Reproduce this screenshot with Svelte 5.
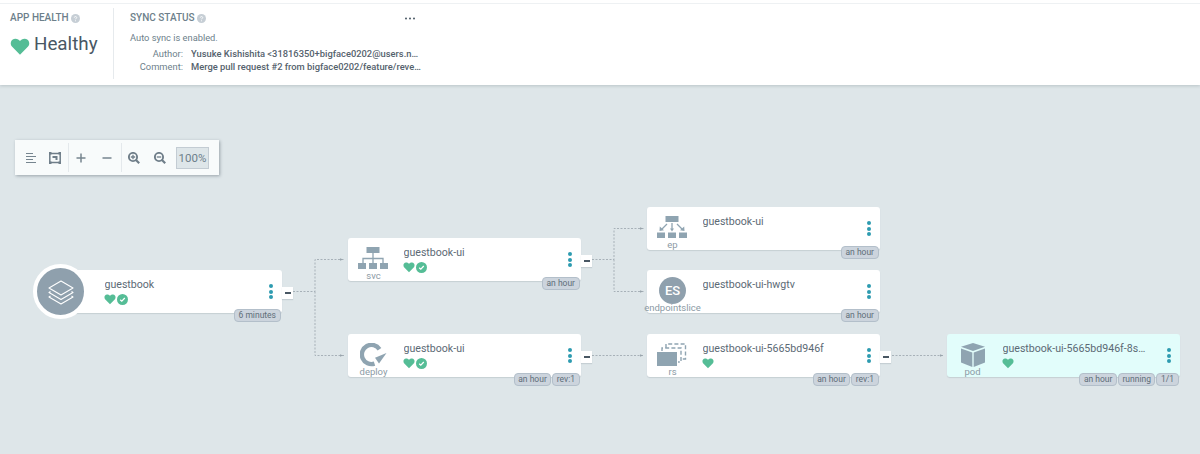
<script lang="ts">
  type GraphNode = {
    x: number;
    y: number;
    name: string;
    kind: string;
    icon: string;
    heart?: boolean;
    check?: boolean;
    badges: string[];
    collapse?: boolean;
    live?: boolean;
    app?: boolean;
  };

  const nodes: GraphNode[] = [
    { x: 49, y: 270, name: "guestbook", kind: "", icon: "app", heart: true, check: true, badges: ["6 minutes"], collapse: true, app: true },
    { x: 348, y: 238, name: "guestbook-ui", kind: "svc", icon: "svc", heart: true, check: true, badges: ["an hour"], collapse: true },
    { x: 348, y: 334, name: "guestbook-ui", kind: "deploy", icon: "deploy", heart: true, check: true, badges: ["an hour", "rev:1"], collapse: true },
    { x: 647, y: 207, name: "guestbook-ui", kind: "ep", icon: "ep", badges: ["an hour"] },
    { x: 647, y: 270, name: "guestbook-ui-hwgtv", kind: "endpointslice", icon: "es", badges: ["an hour"] },
    { x: 647, y: 334, name: "guestbook-ui-5665bd946f", kind: "rs", icon: "rs", heart: true, badges: ["an hour", "rev:1"], collapse: true },
    { x: 947, y: 334, name: "guestbook-ui-5665bd946f-8sq2x", kind: "pod", icon: "pod", heart: true, badges: ["an hour", "running", "1/1"], live: true }
  ];

  const edges = [
    "M293 291.5H315V259.5H344",
    "M315 291.5V355.5H344",
    "M592 259.5H614V228.5H644",
    "M614 259.5V291.5H644",
    "M592 355.5H644",
    "M892 355.5H944"
  ];
  const arrows = [[344, 259.5], [344, 355.5], [644, 228.5], [644, 291.5], [644, 355.5], [944, 355.5]];
</script>

{#snippet heart(size: number)}
  <svg class="heart" width={size} height={size} viewBox="0 0 24 24">
    <path d="M12 22.5 2.6 13C-.6 9.6.8 3.6 6 3.2c2.8-.2 4.9 1.2 6 2.8 1.1-1.6 3.2-3 6-2.8 5.2.4 6.6 6.4 3.4 9.8Z" />
  </svg>
{/snippet}

{#snippet help()}
  <svg class="help" width="9" height="9" viewBox="0 0 9 9">
    <circle cx="4.5" cy="4.5" r="4.5" fill="#c6ced5" />
    <path d="M3.3 3.6c0-1.4 2.4-1.4 2.4 0 0 .9-1.2.8-1.2 1.7" fill="none" stroke="#fff" stroke-width=".9" />
    <circle cx="4.5" cy="6.8" r=".55" fill="#fff" />
  </svg>
{/snippet}

{#snippet kindIcon(icon: string)}
  {#if icon === "svc"}
    <svg width="31" height="23" viewBox="0 0 31 23" fill="#8fa4b1">
      <rect x="8.5" y="0" width="13" height="6" />
      <path d="M15 6v5M5 16v-4.5h20V16M15 11v5" fill="none" stroke="#8fa4b1" stroke-width="1.3" />
      <rect x="0" y="16" width="8" height="6" />
      <rect x="11" y="16" width="8" height="6" />
      <rect x="22" y="16" width="8" height="6" />
    </svg>
  {:else if icon === "deploy"}
    <svg width="27" height="24" viewBox="0 0 27 24">
      <path d="M14.5 20.6A9.6 9.6 0 1 1 19.5 6.2" fill="none" stroke="#8fa4b1" stroke-width="4.4" />
      <path d="M26.5 10 15 14.8 19 20.5Z" fill="#8fa4b1" />
    </svg>
  {:else if icon === "ep"}
    <svg width="31" height="23" viewBox="0 0 31 23" fill="#8fa4b1">
      <rect x="8.5" y="0" width="13" height="6" />
      <path d="M15 7v7M10 8l-5 5M20 8l5 5" fill="none" stroke="#8fa4b1" stroke-width="1.3" />
      <path d="M13 12.5h4L15 15.5ZM2.8 10.5l4.2 3.8-4.5.8ZM27.2 10.5l-4.2 3.8 4.5.8Z" />
      <rect x="0" y="16.5" width="8" height="5.5" />
      <rect x="11" y="16.5" width="8" height="5.5" />
      <rect x="22" y="16.5" width="8" height="5.5" />
    </svg>
  {:else if icon === "es"}
    <span class="es">ES</span>
  {:else if icon === "rs"}
    <svg width="31" height="24" viewBox="0 0 31 24">
      <path d="M9 5V1h19.5v15H25" fill="none" stroke="#8fa4b1" stroke-width="1.4" stroke-dasharray="4 2.2" />
      <path d="M5 8V5h19v14h-3" fill="none" stroke="#8fa4b1" stroke-width="1.4" stroke-dasharray="4 2.2" />
      <rect x="0" y="9" width="20" height="14" fill="#8fa4b1" />
    </svg>
  {:else if icon === "pod"}
    <svg width="24" height="24" viewBox="0 0 24 24" fill="#8fa4b1">
      <path d="M12 0 24 3.8 12 8 0 3.8Z" />
      <path d="M0 5.5 11.3 9.5V24L0 19.5Z" />
      <path d="M24 5.5 12.7 9.5V24L24 19.5Z" />
    </svg>
  {/if}
{/snippet}

<div class="page">
  <header class="status-bar">
    <div class="status-inner">
      <section class="health">
        <h2>APP HEALTH {@render help()}</h2>
        <div class="health-value">{@render heart(20)}<span>Healthy</span></div>
      </section>
      <section class="sync">
        <div class="sync-head">
          <h2>SYNC STATUS {@render help()}</h2>
          <svg class="more" width="10" height="3" viewBox="0 0 10 3" fill="#495763"><circle cx="1" cy="1.5" r="1" /><circle cx="5" cy="1.5" r="1" /><circle cx="9" cy="1.5" r="1" /></svg>
        </div>
        <p class="auto">Auto sync is enabled.</p>
        <dl>
          <dt>Author:</dt>
          <dd>Yusuke Kishishita &lt;31816350+bigface0202@users.noreply.github.com&gt;</dd>
          <dt>Comment:</dt>
          <dd>Merge pull request #2 from bigface0202/feature/revert-change</dd>
        </dl>
      </section>
    </div>
  </header>

  <main class="canvas">
    <div class="toolbar">
      <div class="group">
        <svg width="12" height="12" viewBox="0 0 12 12" stroke="#76858f" stroke-width="1.2"><path d="M1 1.5h7M1 4.5h10M1 7.5h7M1 10.5h10" /></svg>
        <svg width="12" height="12" viewBox="0 0 12 12"><path d="M.8 1.500h10.4v9H.8Z" fill="none" stroke="#6f7e89" stroke-width="1.5" /><path d="M0 0h2.5v2.500H0ZM9.500 0H12v2.500H9.500ZM0 9.500h2.500V12H0ZM9.500 9.500H12V12H9.500ZM3.500 4h5v4H6.500V6h-3Z" fill="#6f7e89" /></svg>
      </div>
      <div class="group wide">
        <svg width="12" height="12" viewBox="0 0 12 12" stroke="#76858f" stroke-width="1.5"><path d="M1.5 6h9M6 1.5v9" /></svg>
        <svg width="12" height="12" viewBox="0 0 12 12" stroke="#76858f" stroke-width="1.5"><path d="M1.5 6h9" /></svg>
      </div>
      <div class="group wide last">
        <svg width="12" height="12" viewBox="0 0 12 12"><circle cx="5" cy="5" r="4.1" fill="none" stroke="#6f7e89" stroke-width="1.9" /><path d="M8 8l3.2 3.2" stroke="#6f7e89" stroke-width="2.2" /><path d="M2.8 5h4.400M5 2.800v4.400" stroke="#6f7e89" stroke-width="1.3" /></svg>
        <svg width="12" height="12" viewBox="0 0 12 12"><circle cx="5" cy="5" r="4.1" fill="none" stroke="#6f7e89" stroke-width="1.9" /><path d="M8 8l3.2 3.2" stroke="#6f7e89" stroke-width="2.2" /><path d="M2.8 5h4.400" stroke="#6f7e89" stroke-width="1.3" /></svg>
        <span class="zoom-level">100%</span>
      </div>
    </div>

    <svg class="edges" width="1200" height="369" viewBox="0 85 1200 369">
      {#each edges as d}
        <path {d} fill="none" stroke="#a7b1b8" stroke-width="1" stroke-dasharray="2 1.5" />
      {/each}
      {#each arrows as [x, y]}
        <path d="M{x - 1} {y}l-3 -1.3v2.6Z" fill="#9aa5ad" />
      {/each}
    </svg>

    {#each nodes as node}
      <article class="node" class:live={node.live} style="left:{node.x}px;top:{node.y - 85}px">
        {#if node.app}
          <div class="app-ring">
            <svg width="26" height="26" viewBox="0 0 26 26" fill="none" stroke="#fff" stroke-width="1.1" stroke-linejoin="round">
              <path d="M13 2 25 9 13 16 1 9Z" />
              <path d="M2.5 12.5 1 13.5l12 7 12-7-1.5-1" />
              <path d="M2.5 17 1 18l12 7 12-7-1.5-1" />
            </svg>
          </div>
        {/if}
        <div class="kind">
          <div class="kind-icon">{@render kindIcon(node.icon)}</div>
          {#if node.kind}<span class="kind-label">{node.kind}</span>{/if}
        </div>
        <div class="info">
          <div class="name">{node.name}</div>
          <div class="states">
            {#if node.heart}{@render heart(12)}{/if}
            {#if node.check}
              <svg width="11" height="11" viewBox="0 0 11 11"><circle cx="5.5" cy="5.5" r="5.5" fill="#55bd96" /><path d="M3.2 5.7 4.8 7.2 7.8 4" fill="none" stroke="#fff" stroke-width="1.2" /></svg>
            {/if}
          </div>
        </div>
        <div class="menu"><i></i><i></i><i></i></div>
        {#if node.collapse}<div class="collapse"><b></b></div>{/if}
        <div class="badges">
          {#each node.badges as b}<span>{b}</span>{/each}
        </div>
      </article>
    {/each}
  </main>
</div>

<style>
  :global(body) {
    margin: 0;
    background: #dee6e9;
    font-family: Roboto, "Noto Sans", sans-serif;
  }
  .page {
    width: 1200px;
    height: 454px;
    overflow: hidden;
    display: flex;
    flex-direction: column;
  }
  .status-bar {
    flex: none;
    padding-top: 3px;
    background: #fff;
    box-shadow: 0 1px 3px rgba(80, 95, 105, 0.25);
    position: relative;
    z-index: 1;
  }
  .status-inner {
    height: 81px;
    border-top: 1px solid #eef1f3;
    display: flex;
  }
  h2 {
    margin: 0;
    font-size: 10px;
    font-weight: 500;
    line-height: 12px;
    color: #6d7f8b;
    display: flex;
    align-items: center;
    gap: 2px;
  }
  .health {
    width: 114px;
    height: 71px;
    margin-top: 4px;
    padding: 4px 0 0 10px;
    box-sizing: border-box;
    border-right: 1px solid #e6eaed;
  }
  .health-value {
    display: flex;
    align-items: center;
    gap: 4px;
    margin-top: 8px;
    font-size: 18.8px;
    line-height: 24px;
    color: #495763;
  }
  .heart { flex: none; }
  .heart path { fill: #55bd96; }
  .health-value .heart { margin-top: 3px; }
  .sync {
    width: 290px;
    margin-left: 16px;
    padding-top: 8px;
  }
  .sync-head {
    display: flex;
    justify-content: space-between;
    align-items: center;
    padding-right: 5px;
  }
  .auto {
    margin: 7px 0 0;
    font-size: 9.3px;
    line-height: 13px;
    color: #6d7f8b;
  }
  dl {
    margin: 3px 0 0;
    display: grid;
    grid-template-columns: 53px 230px;
    column-gap: 8px;
    font-size: 9.35px;
    line-height: 13px;
  }
  dt {
    text-align: right;
    color: #6d7f8b;
  }
  dd {
    margin: 0;
    color: #55626d;
    font-weight: 500;
    white-space: nowrap;
    overflow: hidden;
    text-overflow: ellipsis;
  }
  .canvas {
    position: relative;
    flex: 1;
    background: #dee6e9;
  }
  .toolbar {
    position: absolute;
    left: 15px;
    top: 55px;
    width: 204px;
    height: 35px;
    box-sizing: border-box;
    background: #f8fbfb;
    box-shadow: 1px 1px 3px rgba(70, 85, 95, 0.45);
    display: flex;
    align-items: center;
    padding: 3px 0;
  }
  .group {
    height: 29px;
    display: flex;
    align-items: center;
    gap: 12px;
    padding: 0 7px 0 10px;
    border-right: 1px solid #e4e9ec;
  }
  .group.wide {
    gap: 14px;
    padding: 0 8px 0 6px;
  }
  .group.last {
    border-right: 0;
    padding-right: 0;
  }
  .zoom-level {
    width: 33px;
    height: 22px;
    box-sizing: border-box;
    margin-left: -4px;
    border: 1px solid #c3ccd3;
    background: #dee6e9;
    font-size: 11.5px;
    line-height: 20px;
    text-align: center;
    color: #6d7f8b;
  }
  .edges {
    position: absolute;
    left: 0;
    top: 0;
  }
  .node {
    position: absolute;
    width: 233px;
    height: 43px;
    background: #fff;
    border-radius: 3px;
    box-shadow: 0 1px 1px rgba(90, 105, 115, 0.18);
    display: flex;
  }
  .node.live { background: #e2fdfb; }
  .app-ring {
    position: absolute;
    left: -16px;
    top: -6px;
    width: 47px;
    height: 47px;
    border: 4px solid #fff;
    border-radius: 50%;
    background: #8fa0ad;
    display: flex;
    align-items: center;
    justify-content: center;
  }
  .kind {
    width: 51px;
    flex: none;
    display: flex;
    flex-direction: column;
    align-items: center;
    position: relative;
  }
  .kind-icon {
    height: 33px;
    margin-top: 4px;
    display: flex;
    align-items: center;
    justify-content: center;
  }
  .kind-label {
    position: absolute;
    left: 50%;
    bottom: 0;
    transform: translateX(-50%);
    font-size: 9.5px;
    line-height: 11px;
    color: #8b9aa5;
    white-space: nowrap;
  }
  .es {
    width: 27px;
    height: 27px;
    border-radius: 50%;
    background: #8fa0ad;
    color: #fff;
    font-size: 13px;
    font-weight: 500;
    line-height: 27px;
    text-align: center;
  }
  .info {
    width: 143px;
    margin-left: 4.5px;
    padding-top: 7px;
  }
  .name {
    font-size: 10.6px;
    line-height: 15px;
    color: #5c6a75;
    white-space: nowrap;
    overflow: hidden;
    text-overflow: ellipsis;
  }
  .states {
    display: flex;
    align-items: center;
    gap: 1px;
    height: 12px;
    margin-top: 1px;
    margin-left: -1px;
  }
  .menu {
    position: absolute;
    right: 9px;
    top: 14px;
    display: flex;
    flex-direction: column;
    gap: 1.5px;
  }
  .menu i {
    width: 4px;
    height: 4px;
    border-radius: 50%;
    background: #2d9bb0;
  }
  .collapse {
    position: absolute;
    left: 100%;
    top: 17px;
    width: 11px;
    height: 12px;
    background: #fff;
    box-shadow: 0 1px 1px rgba(90, 105, 115, 0.18);
    display: flex;
    align-items: center;
    justify-content: center;
  }
  .collapse b {
    width: 6px;
    height: 1.5px;
    background: #495763;
  }
  .badges {
    position: absolute;
    right: 1.5px;
    top: 39px;
    display: flex;
    gap: 1px;
  }
  .badges span {
    height: 13px;
    box-sizing: border-box;
    padding: 0 3.5px;
    border: 1px solid #b3bfca;
    border-radius: 4px;
    background: #ccd4dd;
    font-size: 8.5px;
    line-height: 11px;
    color: #5f6e79;
    white-space: nowrap;
  }
</style>
